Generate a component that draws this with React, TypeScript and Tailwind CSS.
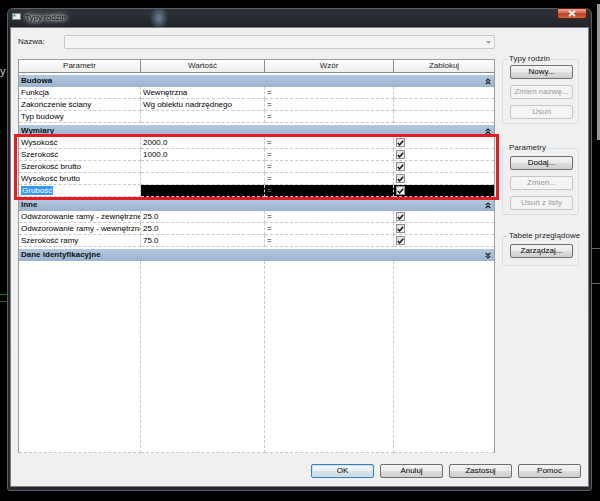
import clsx from "clsx"

type Row = { name: string; value?: string; lock?: boolean; selected?: boolean }
type Group = { title: string; rows: Row[]; collapsed?: boolean }

const groups: Group[] = [
  {
    title: "Budowa",
    rows: [
      { name: "Funkcja", value: "Wewnętrzna" },
      { name: "Zakończenie ściany", value: "Wg obiektu nadrzędnego" },
      { name: "Typ budowy" },
    ],
  },
  {
    title: "Wymiary",
    rows: [
      { name: "Wysokość", value: "2000.0", lock: true },
      { name: "Szerokość", value: "1000.0", lock: true },
      { name: "Szerokość brutto", lock: true },
      { name: "Wysokość brutto", lock: true },
      { name: "Grubość", lock: true, selected: true },
    ],
  },
  {
    title: "Inne",
    rows: [
      { name: "Odwzorowanie ramy - zewnętrzne", value: "25.0", lock: true },
      { name: "Odwzorowanie ramy - wewnętrzne", value: "25.0", lock: true },
      { name: "Szerokość ramy", value: "75.0", lock: true },
    ],
  },
  { title: "Dane identyfikacyjne", rows: [], collapsed: true },
]

const cols = "grid grid-cols-[122px_124px_129px_100px]"
const dashed = "border-dashed border-[#c9c9c9]"

function Chevrons({ down }: { down?: boolean }) {
  return (
    <svg width="6" height="7" viewBox="0 0 6 7">
      <path
        d={down ? "M0.8 1 L3 3.2 L5.2 1 M0.8 3.8 L3 6 L5.2 3.8" : "M0.8 3.2 L3 1 L5.2 3.2 M0.8 6 L3 3.8 L5.2 6"}
        stroke="#1c1c1c"
        strokeWidth="1.2"
        fill="none"
      />
    </svg>
  )
}

function Check() {
  return (
    <span className="flex h-[9px] w-[9px] items-center justify-center border border-[#8e8f8f] bg-linear-to-br from-[#dcdcdc] to-white">
      <svg width="7" height="6" viewBox="0 0 7 6">
        <path d="M0.8 3 L2.6 4.9 L6.2 0.8" stroke="#111" strokeWidth="1.5" fill="none" />
      </svg>
    </span>
  )
}

function Btn({ label, disabled, primary }: { label: string; disabled?: boolean; primary?: boolean }) {
  return (
    <div
      className={clsx(
        "flex h-[14px] w-[63px] items-center justify-center rounded-[2px] border leading-none",
        disabled
          ? "border-[#c3c7ca] bg-[#f4f4f4] text-[#9b9b9b]"
          : primary
            ? "border-[#3c7fb1] bg-[linear-gradient(#f2f6f9,#e9eff4_50%,#d9e3ec_50%,#cfd9e2)] shadow-[inset_0_0_0_1px_#c2e4f8] text-black"
            : "border-[#707070] bg-[linear-gradient(#f2f2f2,#ebebeb_50%,#dddddd_50%,#cfcfcf)] text-black",
      )}
    >
      {label}
    </div>
  )
}

function GroupBox({ title, children, className }: { title: string; children: React.ReactNode; className?: string }) {
  return (
    <fieldset className={clsx("w-[77px] min-w-0 rounded-[3px] border border-[#d5dfe5]", className)}>
      <legend className="ml-[5px] px-[1px] whitespace-nowrap leading-[10px] text-[#1e1e1e]">{title}</legend>
      <div className="flex flex-col gap-[6px] pl-[7px] pr-[5px]">{children}</div>
    </fieldset>
  )
}

function ParamTable() {
  return (
    <div className="mt-[10px] flex h-[394px] w-[477px] flex-col border-x border-t border-[#9c9c9c] bg-white">
      <div className={clsx(cols, "h-[13px] border-b border-[#8d8d8d] bg-linear-to-b from-white to-[#eeeeee] text-[#1e1e1e]")}>
        {["Parametr", "Wartość", "Wzór", "Zablokuj"].map((h, i) => (
          <div key={h} className={clsx("flex items-center justify-center leading-none", i < 3 && "border-r border-[#8d8d8d]")}>
            {h}
          </div>
        ))}
      </div>
      {groups.map((g) => (
        <div key={g.title} className="mt-[2px] flex flex-col">
          <div className="flex h-[12px] items-center justify-between bg-linear-to-b from-[#b3c7df] to-[#9bb4d2] pl-[2px] pr-[3px] font-bold leading-none text-[#111]">
            <span>{g.title}</span>
            <Chevrons down={g.collapsed} />
          </div>
          {g.rows.map((r) => (
            <div key={r.name} className={clsx(cols, "h-[12px] leading-[11px]")}>
              <div className={clsx("overflow-hidden whitespace-nowrap border-r border-b pl-[2px]", dashed)}>
                {r.selected ? <span className="bg-[#3399ff] px-[1px] text-white">{r.name}</span> : r.name}
              </div>
              <div className={clsx("overflow-hidden whitespace-nowrap border-r border-b pl-[2px]", dashed, r.selected && "bg-black")}>
                {r.value}
              </div>
              <div className={clsx("border-r border-b pl-[2px]", dashed, r.selected ? "bg-black text-[#9a9a9a]" : "text-[#222]")}>=</div>
              <div className={clsx("flex items-center border-b pl-[2px]", dashed, r.selected && "bg-black")}>
                {r.lock && <Check />}
              </div>
            </div>
          ))}
        </div>
      ))}
      <div className={clsx(cols, "flex-1")}>
        <div className={clsx("border-r border-b", dashed)} />
        <div className={clsx("border-r border-b", dashed)} />
        <div className={clsx("border-r border-b", dashed)} />
        <div className={clsx("border-b", dashed)} />
      </div>
    </div>
  )
}

export default function App() {
  return (
    <div className="relative flex h-[501px] w-[600px] overflow-hidden bg-black font-['Liberation_Sans',Arial,sans-serif] text-[8px] text-black">
      {/* desktop behind the dialog */}
      <div className="flex w-[7px] flex-col">
        <span className="mt-[64px] text-[11px] leading-[14px] text-[#d0d0d0]">y</span>
        <div className="mt-[216px] h-px bg-[#1d6b27]" />
        <div className="mt-[6px] h-px bg-[#1d6b27]" />
      </div>

      <div className="mt-[8px] flex h-[483px] w-[585px] flex-col rounded-t-[6px] rounded-b-[3px] border border-[#5d6166] bg-[linear-gradient(#30353b,#1b1e21_24px,#25282c)]">
        <div className="flex h-[18px] items-start bg-[radial-gradient(ellipse_9px_12px_at_151px_9px,#6c819c,transparent)]">
          <svg className="mt-[4px] ml-[4px]" width="9" height="7" viewBox="0 0 9 7">
            <rect x="0.5" y="0.5" width="8" height="6" fill="#e8ecef" stroke="#7d8790" />
            <rect x="1.5" y="1.5" width="2" height="2" fill="#3f9a4a" />
          </svg>
          <span className="mt-[4px] ml-[4px] leading-[10px] text-[#0c0c0c] [text-shadow:0_0_3px_#fff,0_0_5px_#fff,0_0_8px_#eee]">
            Typy rodzin
          </span>
          <div className="-mt-px mr-[4px] ml-auto flex h-[11px] w-[30px] items-center justify-center rounded-b-[3px] border border-[#5a1f15] bg-[linear-gradient(#e8a593,#d2654c_45%,#c23a1e_55%,#d16646)]">
            <svg width="8" height="7" viewBox="0 0 8 7">
              <path d="M1 0.8 L7 6.2 M7 0.8 L1 6.2" stroke="#fff" strokeWidth="1.8" />
            </svg>
          </div>
        </div>

        <div className="mx-[2px] mb-[3px] flex flex-1 flex-col border border-[#7b7f83] bg-[#f0f0f0]">
          <div className="flex pt-[7px] pl-[7px]">
            <div className="flex w-[477px] flex-col">
              <div className="flex h-[14px] items-center">
                <span className="w-[46px] text-[#1e1e1e]">Nazwa:</span>
                <div className="flex h-[14px] flex-1 items-center justify-end rounded-[2px] border border-[#c9c9c9] bg-[#f4f4f4] pr-[3px]">
                  <svg width="5" height="3" viewBox="0 0 5 3">
                    <path d="M0 0 H5 L2.5 3 Z" fill="#a4a4a4" />
                  </svg>
                </div>
              </div>
              <ParamTable />
            </div>

            <div className="ml-[7px] flex w-[77px] flex-col">
              <GroupBox title="Typy rodzin" className="mt-[19px] pt-[1px] pb-[4px]">
                <Btn label="Nowy..." />
                <Btn label="Zmień nazwę..." disabled />
                <Btn label="Usuń" disabled />
              </GroupBox>
              <GroupBox title="Parametry" className="mt-[19px] pt-[3px] pb-[4px]">
                <Btn label="Dodaj..." />
                <Btn label="Zmień..." disabled />
                <Btn label="Usuń z listy" disabled />
              </GroupBox>
              <GroupBox title="Tabele przeglądowe" className="mt-[16px] pt-[3px] pb-[7px]">
                <Btn label="Zarządzaj..." />
              </GroupBox>
            </div>
          </div>

          <div className="mt-[11px] flex justify-end gap-[6px] pr-[7px]">
            <Btn label="OK" primary />
            <Btn label="Anuluj" />
            <Btn label="Zastosuj" />
            <Btn label="Pomoc" />
          </div>
        </div>
      </div>

      <div className="flex w-[8px] flex-col items-end">
        <div className="mt-[4px] h-[136px] w-[3px] bg-[#9a9a9a]" />
        <div className="mt-[108px] h-px w-full bg-[#6a6a6a]" />
        <div className="mt-[34px] h-px w-full bg-[#6a6a6a]" />
      </div>

      {/* red annotation frame */}
      <div className="absolute top-[134px] left-[14px] h-[66px] w-[485px] border-[3px] border-[#e41b23]" />
    </div>
  )
}
